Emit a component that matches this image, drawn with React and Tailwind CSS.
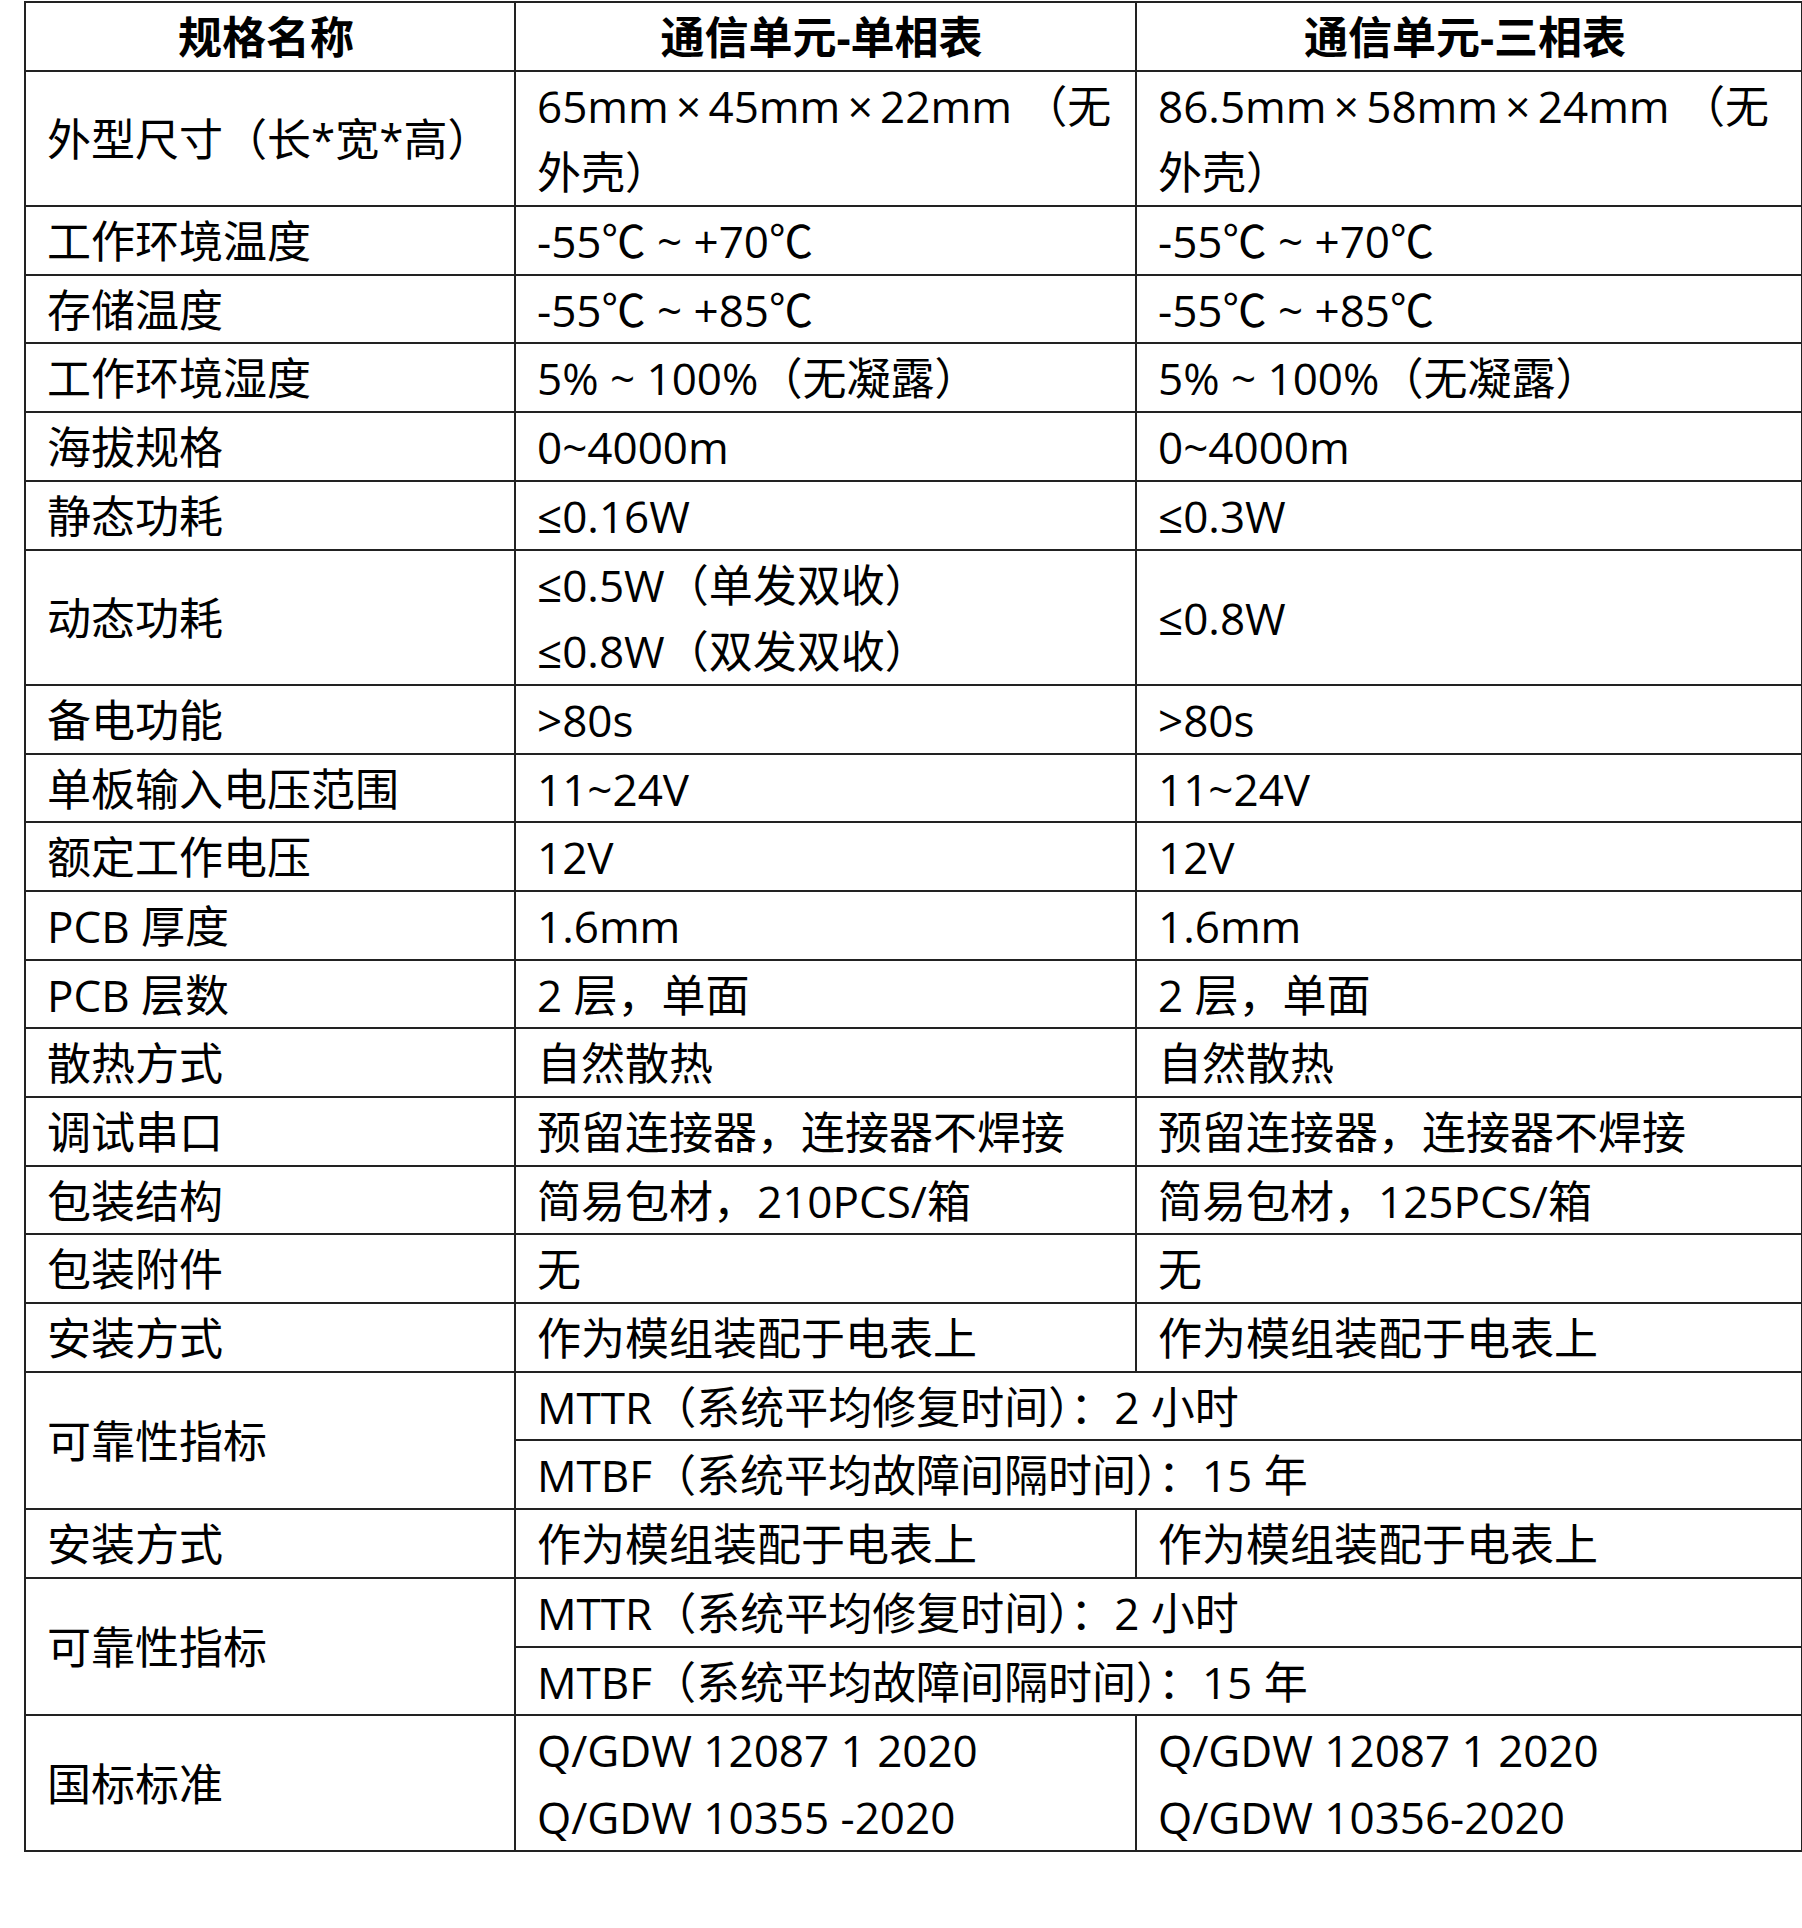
import React from "react";

// 规格参数表：通信单元 单相表 / 三相表
const FONT = '"Open Sans", "Noto Sans CJK SC", sans-serif';

const rowsA = [
  ["工作环境温度", "-55℃ ~ +70℃", "-55℃ ~ +70℃"],
  ["存储温度", "-55℃ ~ +85℃", "-55℃ ~ +85℃"],
  ["工作环境湿度", "5% ~ 100%（无凝露）", "5% ~ 100%（无凝露）"],
  ["海拔规格", "0~4000m", "0~4000m"],
  ["静态功耗", "≤0.16W", "≤0.3W"],
];

const rowsB = [
  ["备电功能", ">80s", ">80s"],
  ["单板输入电压范围", "11~24V", "11~24V"],
  ["额定工作电压", "12V", "12V"],
  ["PCB 厚度", "1.6mm", "1.6mm"],
  ["PCB 层数", "2 层，单面", "2 层，单面"],
  ["散热方式", "自然散热", "自然散热"],
  ["调试串口", "预留连接器，连接器不焊接", "预留连接器，连接器不焊接"],
  ["包装结构", "简易包材，210PCS/箱", "简易包材，125PCS/箱"],
  ["包装附件", "无", "无"],
  ["安装方式", "作为模组装配于电表上", "作为模组装配于电表上"],
];

const td = "border-2 border-[#222] pl-[21px] pr-2 py-0 align-middle whitespace-nowrap";

// 每一行文字固定高度，文字略微下沉
const Line = ({ children }) => (
  <div className="h-[66.7px] pt-[3px] leading-[63.7px]">{children}</div>
);

const Cell = ({ lines, className = "", ...rest }) => (
  <td className={`${td} ${className}`} {...rest}>
    {(Array.isArray(lines) ? lines : [lines]).map((l, i) => (
      <Line key={i}>{l}</Line>
    ))}
  </td>
);

const Row = ({ cells }) => (
  <tr>
    {cells.map((c, i) => (
      <Cell key={i} lines={c} />
    ))}
  </tr>
);

const Reliability = () => (
  <>
    <tr>
      <Cell rowSpan={2} lines="可靠性指标" />
      <Cell colSpan={2} lines="MTTR（系统平均修复时间）：2 小时" />
    </tr>
    <tr>
      <Cell colSpan={2} lines="MTBF（系统平均故障间隔时间）：15 年" />
    </tr>
  </>
);

export default function App() {
  return (
    <div className="bg-white w-[1802px] h-[1928px] pt-[1px]">
      <table
        className="ml-[24px] w-[1777px] table-fixed border-collapse text-[44px] text-black"
        style={{ fontFamily: FONT }}
      >
        <colgroup>
          <col className="w-[490px]" />
          <col className="w-[621px]" />
          <col className="w-[666px]" />
        </colgroup>
        <tbody>
          <tr className="font-bold">
            <Cell className="text-center !pl-0" lines="规格名称" />
            <Cell className="text-center !pl-0" lines="通信单元-单相表" />
            <Cell className="text-center !pl-0" lines="通信单元-三相表" />
          </tr>
          <tr>
            <Cell lines="外型尺寸（长*宽*高）" />
            <Cell lines={["65mm\u2009×\u200945mm\u2009×\u200922mm （无", "外壳）"]} />
            <Cell lines={["86.5mm\u2009×\u200958mm\u2009×\u200924mm （无", "外壳）"]} />
          </tr>
          {rowsA.map((r) => (
            <Row key={r[0]} cells={r} />
          ))}
          <tr>
            <Cell lines="动态功耗" />
            <Cell lines={["≤0.5W（单发双收）", "≤0.8W（双发双收）"]} />
            <Cell lines="≤0.8W" />
          </tr>
          {rowsB.map((r) => (
            <Row key={r[0]} cells={r} />
          ))}
          <Reliability />
          <Row cells={["安装方式", "作为模组装配于电表上", "作为模组装配于电表上"]} />
          <Reliability />
          <tr>
            <Cell lines="国标标准" />
            <Cell lines={["Q/GDW 12087 1 2020", "Q/GDW 10355 -2020"]} />
            <Cell lines={["Q/GDW 12087 1 2020", "Q/GDW 10356-2020"]} />
          </tr>
        </tbody>
      </table>
    </div>
  );
}
